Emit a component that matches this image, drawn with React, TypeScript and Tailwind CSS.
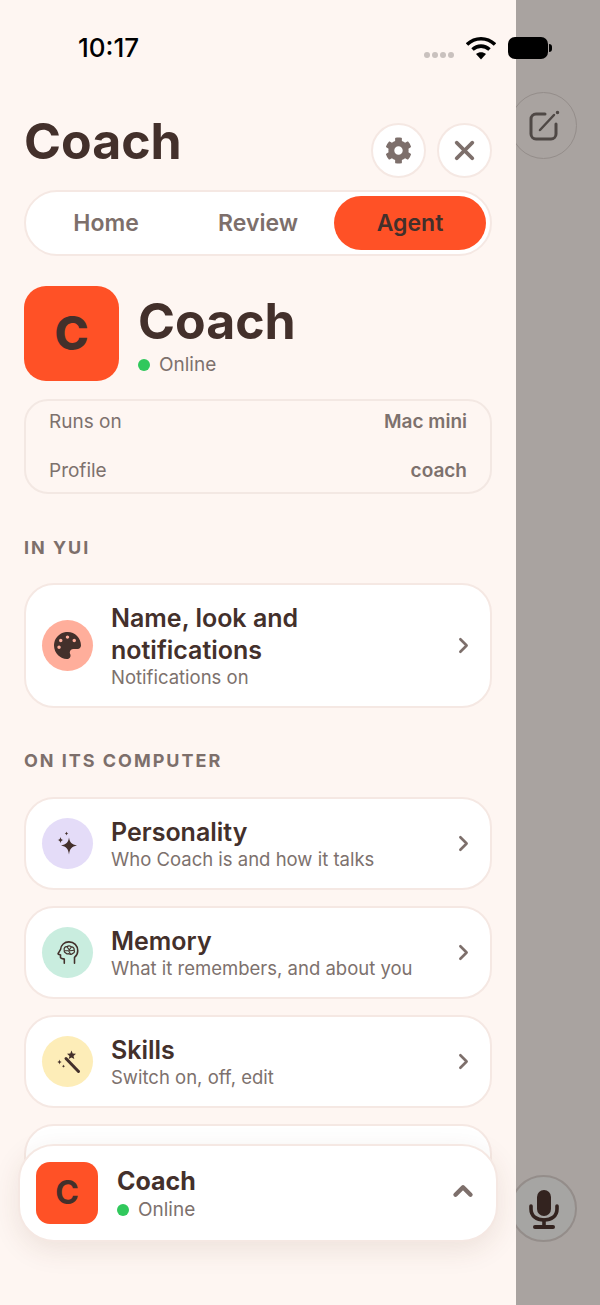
import React from "react";
import { ChevronRight, ChevronUp, X } from "lucide-react";
import { FaCog, FaPalette } from "react-icons/fa";

const ink = "#43302b";

type Row = {
  title: string;
  sub: string;
  tint: string;
  icon: React.ReactNode;
};

const Sparkle = () => (
  <svg viewBox="0 0 28 28" className="w-[28px] h-[28px]" fill={ink}>
    <path d="M15 7.5c.8 5 2.700 6.900 8 8-5.300 1.100-7.200 3-8 9-.8-6-2.700-7.900-8-9 5.300-1.100 7.200-3 8-8z" />
    <path d="M6.500 7c.4 2 1.100 2.700 3 3.100-1.900.4-2.600 1.100-3 3.100-.4-2-1.100-2.700-3-3.100 1.900-.4 2.600-1.100 3-3.100z" />
    <path d="M12.500 1.500c.2 1.200.7 1.700 1.800 2-1.100.3-1.600.8-1.800 2-.2-1.200-.7-1.700-1.800-2 1.100-.3 1.600-.8 1.800-2z" />
  </svg>
);

const HeadBrain = () => (
  <svg viewBox="0 0 28 28" className="w-[26px] h-[26px]" fill="none" stroke={ink} strokeWidth="1.700" strokeLinecap="round" strokeLinejoin="round">
    <path d="M10 25v-4.500c-1.300-.3-3.500-.2-4-1.500-.3-.8 0-2 0-2.800l-2.300-.9c-.4-.2-.5-.6-.2-1L6 10c.6-4.500 4-8 9-8 5.500 0 9.500 4 9.500 9.500 0 3-1.300 5.500-3.500 7.200V25" />
    <path d="M10 11c-.8-2.400 1-4.200 3-3.700 1-1.400 3.600-1.400 4.600.2 2-.2 3.500 1.500 3 3.500.9 1.400 0 3.300-1.600 3.500-1 1.400-3 1.300-3.900.2-1.300.7-3 .3-3.600-.9-1.100-.2-1.800-1.300-1.500-2.800z" strokeWidth="1.300" />
    <path d="M13 7.500l3 4M17.500 7.800l-2 2.500M11 11.500h3.500l2 3M20.500 11l-4 .5" strokeWidth="1.100" />
  </svg>
);

const Wand = () => (
  <svg viewBox="0 0 28 28" className="w-[28px] h-[28px]" fill={ink}>
    <path d="M12 10.500l12.500 13" stroke={ink} strokeWidth="3" strokeLinecap="round" fill="none" />
    <path d="M17.500 2.500l1.200 3 3.300.3-2.500 2.100.8 3.200-2.800-1.700-2.800 1.700.8-3.200-2.500-2.100 3.300-.3z" />
    <path d="M5.500 11.500c.3 1.500.9 2.100 2.400 2.500-1.500.4-2.100 1-2.400 2.500-.3-1.500-.9-2.100-2.400-2.500 1.500-.4 2.100-1 2.400-2.500z" />
    <path d="M9.500 16.500c.2 1 .6 1.400 1.600 1.700-1 .3-1.400.7-1.600 1.700-.2-1-.6-1.400-1.600-1.700 1-.3 1.400-.7 1.600-1.700z" />
  </svg>
);

const CARD = "bg-white border-2 border-[#f5e8e3] rounded-[30px] flex items-center";

const ListCard = ({ row, tall }: { row: Row; tall?: boolean }) => (
  <div className={`${CARD} pl-[16px] pr-[14px] ${tall ? "h-[125px]" : "h-[93px]"}`}>
    <div className={`w-[51px] h-[51px] rounded-full flex items-center justify-center shrink-0 ${row.tint}`}>
      {row.icon}
    </div>
    <div className="ml-[18px] flex-1">
      <div className="text-[25px] leading-[32px] font-semibold text-[#43302b]">{row.title}</div>
      <div className="text-[18.500px] leading-[23px] text-[#7d716d]">{row.sub}</div>
    </div>
    <ChevronRight className="w-[25px] h-[25px] text-[#7d6f6b]" strokeWidth={2.500} />
  </div>
);

const Label = ({ children, className }: { children: React.ReactNode; className?: string }) => (
  <div className={`text-[18px] leading-[22px] font-bold tracking-[0.11em] text-[#7d6f6b] ${className ?? ""}`}>
    {children}
  </div>
);

const rows: Row[] = [
  { title: "Personality", sub: "Who Coach is and how it talks", tint: "bg-[#e4dcf8]", icon: <Sparkle /> },
  { title: "Memory", sub: "What it remembers, and about you", tint: "bg-[#c9eddf]", icon: <HeadBrain /> },
  { title: "Skills", sub: "Switch on, off, edit", tint: "bg-[#fdedb8]", icon: <Wand /> },
];

export default function App() {
  return (
    <div className="relative w-[600px] h-[1305px] overflow-hidden flex bg-[#a9a3a0]" style={{ fontFamily: "Inter, sans-serif" }}>
      {/* status bar sits above both the drawer and the dimmed page */}
      <div className="absolute top-[34px] left-0 right-0 h-[28px] z-30 pl-[78px] pr-[48px] flex items-center justify-between">
        <span className="text-[26px] leading-[28px] font-medium text-black">10:17</span>
        <div className="flex items-center">
          <div className="flex gap-[2px] mt-[14px] mr-[12px]">
            <span className="w-[6px] h-[6px] rounded-full bg-[#c9c1be]" />
            <span className="w-[6px] h-[6px] rounded-full bg-[#c9c1be]" />
            <span className="w-[6px] h-[6px] rounded-full bg-[#c9c1be]" />
            <span className="w-[6px] h-[6px] rounded-full bg-[#c9c1be]" />
          </div>
          <svg viewBox="0 0 30 24" className="w-[30px] h-[24px] mr-[12px]">
            <path d="M1 8.500C9 .8 21 .8 29 8.500" fill="none" stroke="#000" strokeWidth="3.600" />
            <path d="M6.500 13.500c5-4.500 12-4.500 17 0" fill="none" stroke="#000" strokeWidth="3.600" />
            <path d="M10 18c3-2.500 7-2.500 10 0l-5 5.500z" fill="#000" />
          </svg>
          <div className="w-[40px] h-[22px] rounded-[7px] bg-black" />
          <div className="w-[3px] h-[8px] rounded-r-full bg-black ml-[1px]" />
        </div>
      </div>

      {/* drawer */}
      <div className="relative z-20 w-[516px] h-full shrink-0 overflow-hidden bg-[#fef6f2] px-[24px] pt-[111px]">
        <div className="flex items-start justify-between">
          <h1 className="text-[50px] leading-[60px] font-bold text-[#43302b]">Coach</h1>
          <div className="flex gap-[11px] mt-[12px]">
            <div className="w-[55px] h-[55px] rounded-full bg-white border-2 border-[#f5e8e3] flex items-center justify-center">
              <FaCog className="w-[27px] h-[27px] text-[#7d6f6b]" />
            </div>
            <div className="w-[55px] h-[55px] rounded-full bg-white border-2 border-[#f5e8e3] flex items-center justify-center">
              <X className="w-[31px] h-[31px] text-[#7d6f6b]" strokeWidth={3} />
            </div>
          </div>
        </div>

        <div className="mt-[12px] h-[66px] bg-white border-2 border-[#f5e8e3] rounded-full p-[4px] grid grid-cols-3 text-[23px] font-semibold text-[#7d6f6b]">
          <div className="flex items-center justify-center">Home</div>
          <div className="flex items-center justify-center">Review</div>
          <div className="flex items-center justify-center rounded-full bg-[#ff5126] text-[#43302b]">Agent</div>
        </div>

        <div className="mt-[30px] flex items-center">
          <div className="w-[95px] h-[95px] rounded-[22px] bg-[#ff5126] flex items-center justify-center text-[46px] font-extrabold text-[#43302b]">
            C
          </div>
          <div className="ml-[19px]">
            <div className="text-[50px] leading-[60px] font-bold text-[#43302b]">Coach</div>
            <div className="flex items-center mt-[2px]">
              <span className="w-[12px] h-[12px] rounded-full bg-[#30c85c]" />
              <span className="ml-[9px] text-[19px] leading-[24px] text-[#7d716d]">Online</span>
            </div>
          </div>
        </div>

        <div className="mt-[18px] h-[95px] border-2 border-[#f3e8e3] rounded-[24px] px-[23px] flex flex-col justify-between py-[9px] text-[19px] leading-[24px] text-[#7d716d]">
          <div className="flex justify-between">
            <span>Runs on</span>
            <span className="font-semibold">Mac mini</span>
          </div>
          <div className="flex justify-between">
            <span>Profile</span>
            <span className="font-semibold">coach</span>
          </div>
        </div>

        <Label className="mt-[43px]">IN YUI</Label>
        <div className="mt-[24px]">
          <ListCard
            tall
            row={{
              title: "Name, look and notifications",
              sub: "Notifications on",
              tint: "bg-[#ffae9b]",
              icon: <FaPalette className="w-[27px] h-[27px] text-[#43302b]" />,
            }}
          />
        </div>

        <Label className="mt-[42px]">ON ITS COMPUTER</Label>
        <div className="mt-[25px] flex flex-col gap-[16px]">
          {rows.map((row) => (
            <ListCard key={row.title} row={row} />
          ))}
          <div className={`${CARD} h-[93px]`} />
        </div>

        {/* collapsed agent bar floats over the list */}
        <div className="absolute left-[18px] top-[1144px] w-[480px] h-[98px] bg-white border-2 border-[#f5e8e3] rounded-[36px] shadow-[0_8px_28px_rgba(90,50,30,0.10)] pl-[16px] pr-[18px] flex items-center">
          <div className="w-[62px] h-[62px] rounded-[14px] bg-[#ff5126] flex items-center justify-center text-[32px] font-bold text-[#43302b]">
            C
          </div>
          <div className="ml-[19px] flex-1">
            <div className="text-[25px] leading-[32px] font-bold text-[#43302b]">Coach</div>
            <div className="flex items-center mt-[1px]">
              <span className="w-[12px] h-[12px] rounded-full bg-[#30c85c]" />
              <span className="ml-[9px] text-[19px] leading-[24px] text-[#7d716d]">Online</span>
            </div>
          </div>
          <ChevronUp className="w-[30px] h-[30px] text-[#7d6f6b] -mt-[4px]" strokeWidth={3.500} />
        </div>
      </div>

      {/* dimmed page behind the drawer */}
      <div className="flex-1 flex flex-col justify-between pt-[92px] pb-[63px]">
        <div className="-ml-[6px] w-[67px] h-[67px] rounded-full border border-[#948d8a] flex items-center justify-center">
          <svg viewBox="0 0 32 32" className="w-[32px] h-[32px]" fill="none" stroke="#4f4845" strokeWidth="3" strokeLinecap="round" strokeLinejoin="round">
            <path d="M17 4H8a5 5 0 0 0-5 5v15a5 5 0 0 0 5 5h15a5 5 0 0 0 5-5V14" />
            <path d="M12 20L26 5" strokeWidth="2.500" />
            <circle cx="29.500" cy="2.500" r="1" fill="#4f4845" strokeWidth="1.500" />
          </svg>
        </div>
        <div className="-ml-[6px] w-[67px] h-[67px] rounded-full border-2 border-[#948d8a] bg-[#a6a5a3] flex items-center justify-center">
          <svg viewBox="0 0 32 40" className="w-[32px] h-[40px]" fill="none" stroke="#33231f" strokeLinecap="round">
            <rect x="9" y="1" width="14" height="26" rx="7" fill="#33231f" stroke="none" />
            <path d="M3 17v3c0 7 5.500 11 13 11s13-4 13-11v-3" strokeWidth="3.600" />
            <path d="M16 31v5" strokeWidth="3.600" />
            <path d="M7 38h18" strokeWidth="4" />
          </svg>
        </div>
      </div>
    </div>
  );
}
